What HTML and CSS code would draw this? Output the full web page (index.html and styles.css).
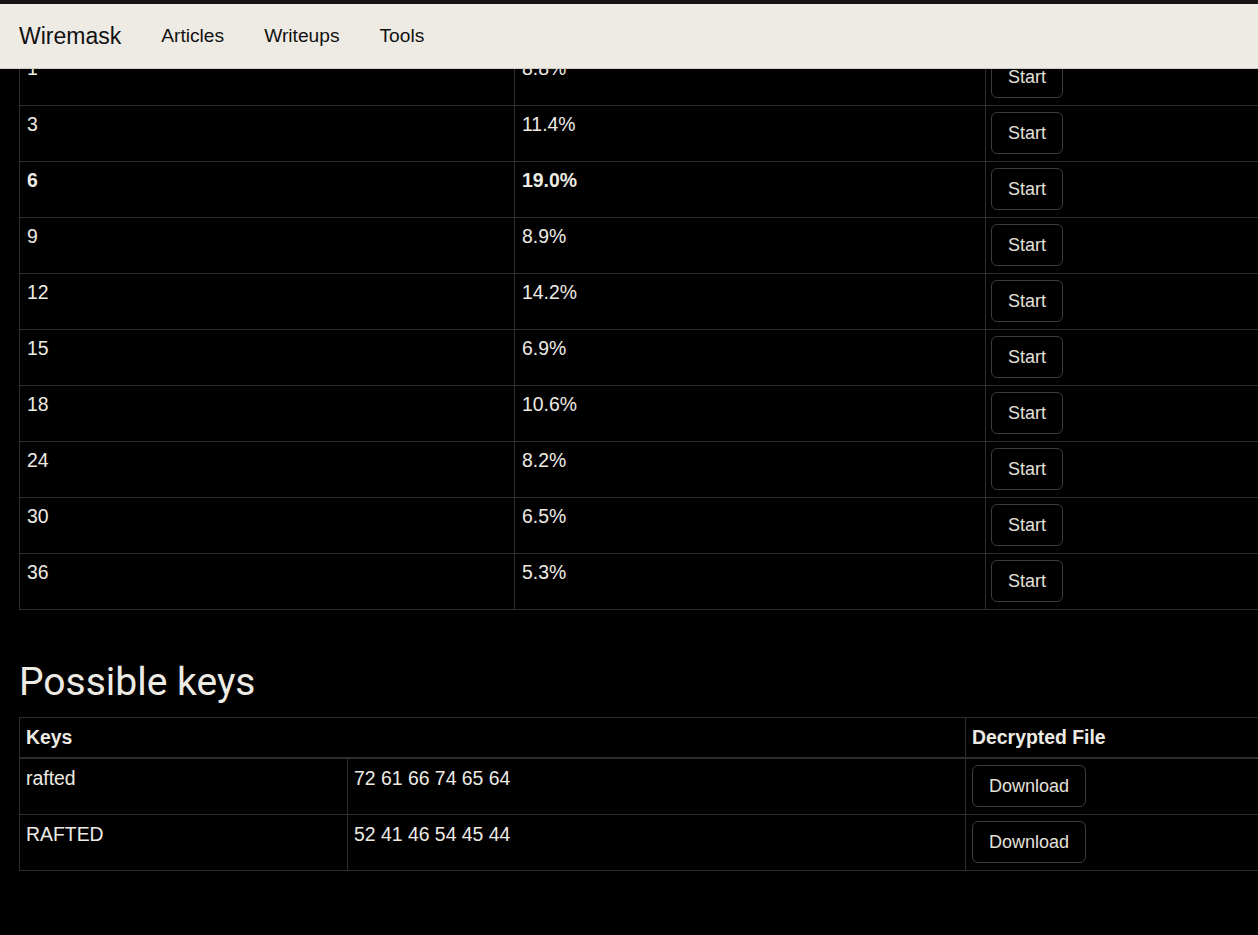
FILE: index.html
```html
<!DOCTYPE html>
<html lang="en">
<head>
<meta charset="utf-8">
<title>Wiremask - XOR decryption</title>
<link rel="stylesheet" href="styles.css">
</head>
<body>
<nav class="navbar">
  <a class="brand" href="#">Wiremask</a>
  <a class="nav-link" href="#">Articles</a>
  <a class="nav-link" href="#">Writeups</a>
  <a class="nav-link" href="#">Tools</a>
</nav>
<main class="content">
  <table class="data-table lengths">
    <colgroup>
      <col class="c-len"><col class="c-prob"><col class="c-act">
    </colgroup>
    <tbody>
      <tr><td>1</td><td>8.8%</td><td class="act"><button class="btn">Start</button></td></tr>
      <tr><td>3</td><td>11.4%</td><td class="act"><button class="btn">Start</button></td></tr>
      <tr class="best"><td>6</td><td>19.0%</td><td class="act"><button class="btn">Start</button></td></tr>
      <tr><td>9</td><td>8.9%</td><td class="act"><button class="btn">Start</button></td></tr>
      <tr><td>12</td><td>14.2%</td><td class="act"><button class="btn">Start</button></td></tr>
      <tr><td>15</td><td>6.9%</td><td class="act"><button class="btn">Start</button></td></tr>
      <tr><td>18</td><td>10.6%</td><td class="act"><button class="btn">Start</button></td></tr>
      <tr><td>24</td><td>8.2%</td><td class="act"><button class="btn">Start</button></td></tr>
      <tr><td>30</td><td>6.5%</td><td class="act"><button class="btn">Start</button></td></tr>
      <tr><td>36</td><td>5.3%</td><td class="act"><button class="btn">Start</button></td></tr>
    </tbody>
  </table>

  <h2 class="section-title">Possible keys</h2>

  <table class="data-table keys">
    <colgroup>
      <col class="c-key"><col class="c-hex"><col class="c-file">
    </colgroup>
    <thead>
      <tr><th colspan="2">Keys</th><th>Decrypted File</th></tr>
    </thead>
    <tbody>
      <tr><td>rafted</td><td>72 61 66 74 65 64</td><td class="act"><button class="btn">Download</button></td></tr>
      <tr><td>RAFTED</td><td>52 41 46 54 45 44</td><td class="act"><button class="btn">Download</button></td></tr>
    </tbody>
  </table>
</main>
</body>
</html>
```

FILE: styles.css
```css
html, body {
  margin: 0;
  padding: 0;
  background: #000;
  overflow: hidden;
}

body {
  font-family: "Liberation Sans", Arial, sans-serif;
  color: #eeebe5;
}

.navbar {
  position: fixed;
  top: 0;
  left: 0;
  right: 0;
  z-index: 10;
  height: 64px;
  display: flex;
  align-items: center;
  gap: 40px;
  padding: 0 19px;
  background: #eeebe5;
  border-top: 4px solid #151515;
  border-bottom: 1px solid #cfccc6;
}

.navbar a {
  color: #111;
  text-decoration: none;
}

.brand {
  font-size: 23px;
  padding-top: 1px;
}

.nav-link {
  font-size: 19.2px;
}

.content {
  padding: 49px 0 60px 19px;
}

.data-table {
  border-collapse: collapse;
  table-layout: fixed;
  width: 1436px;
  font-size: 19.4px;
}

.data-table td,
.data-table th {
  border: 1px solid #2e2e2e;
  padding: 6px 6px 7px 7px;
  line-height: 25px;
  text-align: left;
  vertical-align: top;
}

.data-table th {
  font-weight: bold;
  padding: 6px 6px 6px 6px;
  line-height: 27px;
  border-bottom: 2px solid #2e2e2e;
}

.keys td {
  padding-left: 6px;
  padding-top: 7px;
  padding-bottom: 6px;
}

.data-table td.act {
  padding: 6px 6px 7px 5px;
}

.keys td.act {
  padding-left: 6px;
}

.c-len { width: 495px; }
.c-prob { width: 471px; }
.c-act { width: 470px; }

.c-key { width: 328px; }
.c-hex { width: 618px; }
.c-file { width: 490px; }

.best td {
  font-weight: bold;
}

.btn {
  display: block;
  height: 42px;
  padding: 0 16px;
  background: #000;
  color: #e4e1db;
  border: 1px solid #3c3c3c;
  border-radius: 6px;
  font-family: "Liberation Sans", Arial, sans-serif;
  font-size: 18px;
  font-weight: normal;
}

.section-title {
  font-family: Roboto, "Liberation Sans", sans-serif;
  font-weight: 400;
  font-size: 39px;
  line-height: 47px;
  margin: 49px 0 11px 0;
  color: #eeebe5;
}
```
